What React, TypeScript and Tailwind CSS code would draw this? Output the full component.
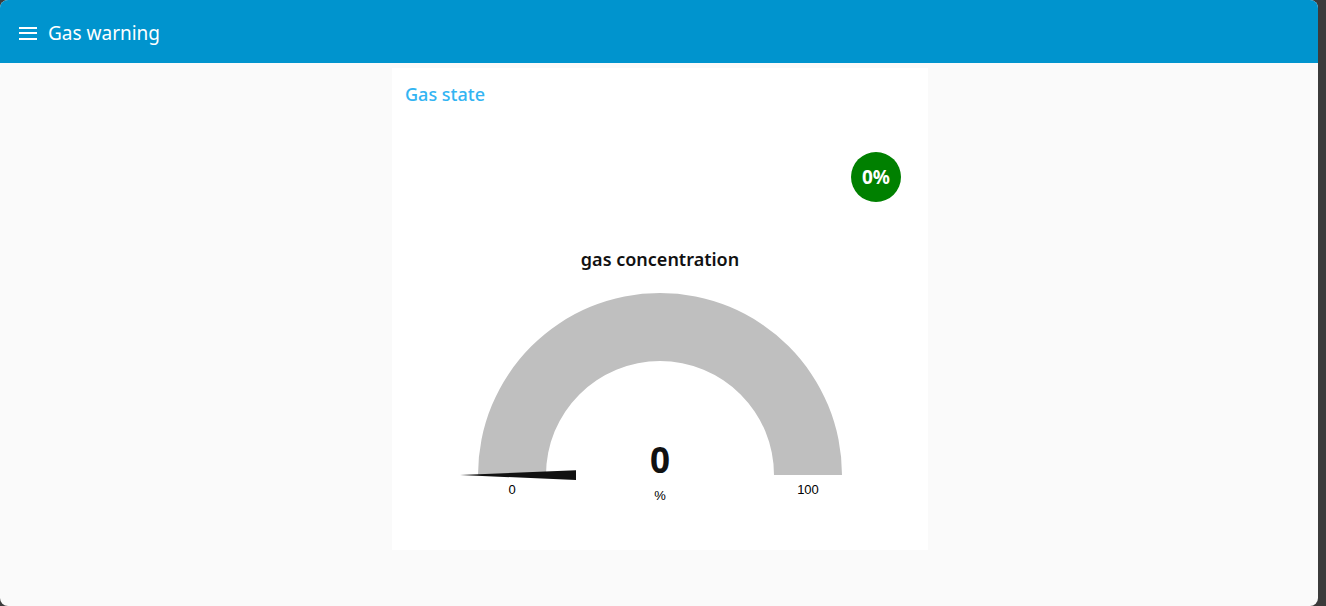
// App.tsx
// Gas warning dashboard: a single group card with a status badge and a half-donut gauge.

import React from 'react';

const FONT = { fontFamily: '"Noto Sans", "Open Sans", sans-serif' };
const ARIAL = { fontFamily: '"Liberation Sans", Arial, sans-serif' };

// Half-donut gauge, value 0..100
const Gauge: React.FC<{ value: number; min: number; max: number; units: string }> = ({ value, min, max, units }) => {
  const cx = 268;
  const cy = 195;
  const outer = 182;
  const inner = 114;
  const arc = `M ${cx - outer} ${cy} A ${outer} ${outer} 0 0 1 ${cx + outer} ${cy} L ${cx + inner} ${cy} A ${inner} ${inner} 0 0 0 ${cx - inner} ${cy} Z`;
  const angle = ((value - min) / (max - min)) * 180;

  return (
    <svg width={536} height={230} viewBox="0 0 536 230" className="block">
      <path d={arc} fill="#bfbfbf" />
      <g transform={`rotate(${angle} ${cx} ${cy})`}>
        <polygon points={`${cx - 200},${cy} ${cx - 84},${cy - 4.8} ${cx - 84},${cy + 5}`} fill="#111111" />
      </g>
      <text x={120} y={214} textAnchor="middle" fontSize={13} fill="#000" style={ARIAL}>
        {min}
      </text>
      <text x={416} y={214} textAnchor="middle" fontSize={13} fill="#000" style={ARIAL}>
        {max}
      </text>
      <text x={cx} y={193} textAnchor="middle" fontSize={35} fontWeight={700} fill="#111" style={FONT}>
        {value}
      </text>
      <text x={cx} y={220} textAnchor="middle" fontSize={13} fill="#000" style={ARIAL}>
        {units}
      </text>
    </svg>
  );
};

export default function App() {
  return (
    <div className="w-[1326px] h-[606px] bg-[#3b3b3b] flex" style={FONT}>
      <div className="w-[1318px] h-[606px] rounded-[8px] overflow-hidden bg-[#fafafa] flex flex-col">
        {/* toolbar */}
        <header className="h-[63px] bg-[#0094ce] flex items-center shrink-0">
          <div className="ml-[19px] mt-[3px] w-[18px] flex flex-col gap-[3.5px]">
            <span className="block h-[2px] bg-white" />
            <span className="block h-[2px] bg-white" />
            <span className="block h-[2px] bg-white" />
          </div>
          <h1 className="ml-[11px] mt-[3px] text-white text-[19px] leading-none">Gas warning</h1>
        </header>

        {/* content */}
        <main className="flex-1 flex justify-center pt-[5px]">
          <section className="w-[536px] h-[482px] bg-white flex flex-col ml-[2px]">
            <div className="h-[52px] pl-[13px] text-[18px] leading-[52px] font-medium text-[#33b4f2]">Gas state</div>

            <div className="mt-[32px] flex justify-end pr-[27px]">
              <div className="w-[50px] h-[50px] rounded-full bg-[#008000] flex items-center justify-center text-white text-[19px] font-bold">
                0%
              </div>
            </div>

            <div className="mt-[45px] text-center text-[18px] leading-[24px] font-semibold text-[#111]">gas concentration</div>

            <div className="mt-[9px]">
              <Gauge value={0} min={0} max={100} units="%" />
            </div>
          </section>
        </main>
      </div>
    </div>
  );
}
